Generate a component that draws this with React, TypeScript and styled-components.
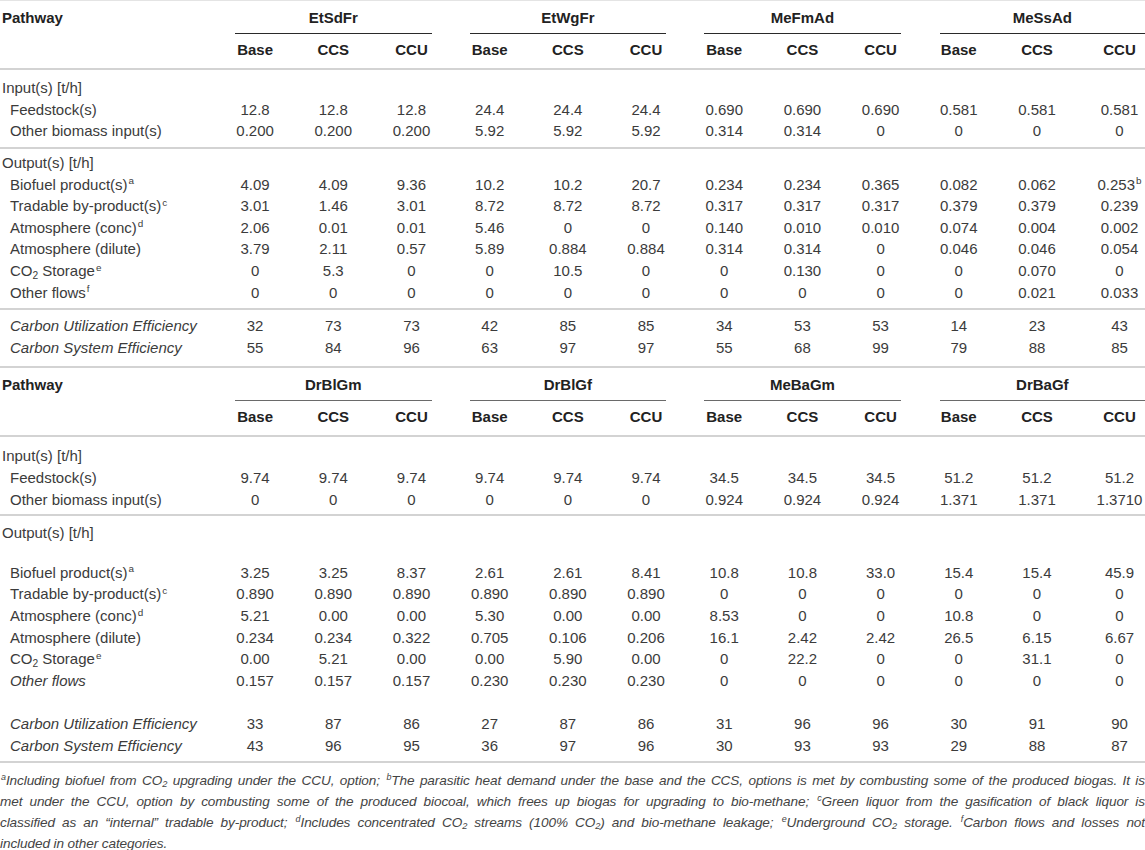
import React from "react";
import styled, { createGlobalStyle } from "styled-components";

const GlobalStyle = createGlobalStyle`
  html, body { margin: 0; padding: 0; background: #ffffff; }
  body {
    font-family: "Liberation Sans", Arial, Helvetica, sans-serif;
    color: #3b3b3b;
    -webkit-font-smoothing: antialiased;
  }
`;

const COLS = "216px repeat(11, 78.2px) 1fr";

const Page = styled.div`
  width: 1145px;
  border-top: 1px solid #e4e4e4;
`;

const GroupRow = styled.div`
  display: grid;
  grid-template-columns: ${COLS};
  padding-top: 6px;
  font-size: 15px;
`;

const HeadLabel = styled.div`
  font-weight: 700;
  color: #222;
  line-height: 22px;
  padding-left: 2px;
`;

const GroupName = styled.div<{ $tone: string }>`
  grid-column: span 3;
  margin: 0 19px;
  text-align: center;
  font-weight: 700;
  color: #222;
  line-height: 22px;
  padding-bottom: 4px;
  border-bottom: 1px solid ${(p) => p.$tone};
  &:last-child {
    margin: 0 0 0 20px;
  }
`;

const SubRow = styled.div`
  display: grid;
  grid-template-columns: ${COLS};
  padding: 5px 0 7px;
  border-bottom: 2px solid #d3d3d3;
  font-size: 15px;
`;

const SubCell = styled.div`
  text-align: center;
  font-weight: 700;
  color: #222;
  line-height: 22px;
  &:last-child {
    padding-left: 18px;
  }
`;

const Section = styled.div<{ $top: number; $bottom: number; $rule?: boolean }>`
  padding-top: ${(p) => p.$top}px;
  padding-bottom: ${(p) => p.$bottom}px;
  border-bottom: ${(p) => (p.$rule ? "2px solid #d3d3d3" : "none")};
`;

const Row = styled.div`
  display: grid;
  grid-template-columns: ${COLS};
  align-items: center;
  height: 21.6px;
  font-size: 15px;
`;

const Spacer = styled.div<{ $h: number }>`
  height: ${(p) => p.$h}px;
`;

const Label = styled.div<{ $indent?: boolean; $italic?: boolean }>`
  padding-left: ${(p) => (p.$indent ? 10 : 2)}px;
  font-style: ${(p) => (p.$italic ? "italic" : "normal")};
  white-space: nowrap;
  line-height: 21px;
`;

const Value = styled.div`
  text-align: center;
  white-space: nowrap;
  line-height: 21px;
  &:last-child {
    padding-left: 18px;
  }
`;

const Sup = styled.sup`
  font-size: 0.66em;
  line-height: 0;
  vertical-align: 0.55em;
  margin-left: 1px;
`;

const Sub = styled.sub`
  font-size: 0.68em;
  line-height: 0;
  vertical-align: -0.25em;
`;

const Notes = styled.div`
  border-top: 2px solid #d3d3d3;
  padding-top: 7px;
  font-size: 13.6px;
  font-style: italic;
  color: #444;
  letter-spacing: -0.1px;
`;

const NoteLine = styled.div<{ $last?: boolean }>`
  line-height: 21px;
  white-space: nowrap;
  text-align: justify;
  text-align-last: ${(p) => (p.$last ? "left" : "justify")};
`;

type Cell = React.ReactNode;
type DataRow = { label: React.ReactNode; italic?: boolean; values: Cell[] };

const SUBS = ["Base", "CCS", "CCU"];

const Header: React.FC<{ groups: string[]; tone: string }> = ({ groups, tone }) => (
  <>
    <GroupRow>
      <HeadLabel>Pathway</HeadLabel>
      {groups.map((g) => (
        <GroupName key={g} $tone={tone}>
          {g}
        </GroupName>
      ))}
    </GroupRow>
    <SubRow>
      <div />
      {groups.flatMap((g) => SUBS.map((s) => <SubCell key={g + s}>{s}</SubCell>))}
    </SubRow>
  </>
);

const Rows: React.FC<{ rows: DataRow[] }> = ({ rows }) => (
  <>
    {rows.map((r, i) => (
      <Row key={i}>
        <Label $indent $italic={r.italic}>
          {r.label}
        </Label>
        {r.values.map((v, j) => (
          <Value key={j}>{v}</Value>
        ))}
      </Row>
    ))}
  </>
);

const Title: React.FC<{ children: React.ReactNode }> = ({ children }) => (
  <Row>
    <Label>{children}</Label>
  </Row>
);

const split = (s: string) => s.split(" ");

const biofuel = (
  <>
    Biofuel product(s)<Sup>a</Sup>
  </>
);
const tradable = (
  <>
    Tradable by-product(s)<Sup>c</Sup>
  </>
);
const conc = (
  <>
    Atmosphere (conc)<Sup>d</Sup>
  </>
);
const storage = (
  <>
    CO<Sub>2</Sub> Storage<Sup>e</Sup>
  </>
);

const t1Input: DataRow[] = [
  { label: "Feedstock(s)", values: split("12.8 12.8 12.8 24.4 24.4 24.4 0.690 0.690 0.690 0.581 0.581 0.581") },
  { label: "Other biomass input(s)", values: split("0.200 0.200 0.200 5.92 5.92 5.92 0.314 0.314 0 0 0 0") },
];

const t1Output: DataRow[] = [
  {
    label: biofuel,
    values: [
      ...split("4.09 4.09 9.36 10.2 10.2 20.7 0.234 0.234 0.365 0.082 0.062"),
      <>
        0.253<Sup>b</Sup>
      </>,
    ],
  },
  { label: tradable, values: split("3.01 1.46 3.01 8.72 8.72 8.72 0.317 0.317 0.317 0.379 0.379 0.239") },
  { label: conc, values: split("2.06 0.01 0.01 5.46 0 0 0.140 0.010 0.010 0.074 0.004 0.002") },
  { label: "Atmosphere (dilute)", values: split("3.79 2.11 0.57 5.89 0.884 0.884 0.314 0.314 0 0.046 0.046 0.054") },
  { label: storage, values: split("0 5.3 0 0 10.5 0 0 0.130 0 0 0.070 0") },
  {
    label: (
      <>
        Other flows<Sup>f</Sup>
      </>
    ),
    values: split("0 0 0 0 0 0 0 0 0 0 0.021 0.033"),
  },
];

const t1Eff: DataRow[] = [
  { label: "Carbon Utilization Efficiency", italic: true, values: split("32 73 73 42 85 85 34 53 53 14 23 43") },
  { label: "Carbon System Efficiency", italic: true, values: split("55 84 96 63 97 97 55 68 99 79 88 85") },
];

const t2Input: DataRow[] = [
  { label: "Feedstock(s)", values: split("9.74 9.74 9.74 9.74 9.74 9.74 34.5 34.5 34.5 51.2 51.2 51.2") },
  { label: "Other biomass input(s)", values: split("0 0 0 0 0 0 0.924 0.924 0.924 1.371 1.371 1.3710") },
];

const t2Output: DataRow[] = [
  { label: biofuel, values: split("3.25 3.25 8.37 2.61 2.61 8.41 10.8 10.8 33.0 15.4 15.4 45.9") },
  { label: tradable, values: split("0.890 0.890 0.890 0.890 0.890 0.890 0 0 0 0 0 0") },
  { label: conc, values: split("5.21 0.00 0.00 5.30 0.00 0.00 8.53 0 0 10.8 0 0") },
  { label: "Atmosphere (dilute)", values: split("0.234 0.234 0.322 0.705 0.106 0.206 16.1 2.42 2.42 26.5 6.15 6.67") },
  { label: storage, values: split("0.00 5.21 0.00 0.00 5.90 0.00 0 22.2 0 0 31.1 0") },
  { label: "Other flows", italic: true, values: split("0.157 0.157 0.157 0.230 0.230 0.230 0 0 0 0 0 0") },
];

const t2Eff: DataRow[] = [
  { label: "Carbon Utilization Efficiency", italic: true, values: split("33 87 86 27 87 86 31 96 96 30 91 90") },
  { label: "Carbon System Efficiency", italic: true, values: split("43 96 95 36 97 96 30 93 93 29 88 87") },
];

export default function App() {
  return (
    <>
      <GlobalStyle />
      <Page>
        <Header groups={["EtSdFr", "EtWgFr", "MeFmAd", "MeSsAd"]} tone="#2a2a2a" />
        <Section $top={7} $bottom={5} $rule>
          <Title>Input(s) [t/h]</Title>
          <Rows rows={t1Input} />
        </Section>
        <Section $top={3} $bottom={5} $rule>
          <Title>Output(s) [t/h]</Title>
          <Rows rows={t1Output} />
        </Section>
        <Section $top={5} $bottom={8} $rule>
          <Rows rows={t1Eff} />
        </Section>

        <Header groups={["DrBlGm", "DrBlGf", "MeBaGm", "DrBaGf"]} tone="#6a6a6a" />
        <Section $top={8} $bottom={4} $rule>
          <Title>Input(s) [t/h]</Title>
          <Rows rows={t2Input} />
        </Section>
        <Section $top={6} $bottom={5}>
          <Title>Output(s) [t/h]</Title>
          <Spacer $h={18} />
          <Rows rows={t2Output} />
          <Spacer $h={21.6} />
          <Rows rows={t2Eff} />
        </Section>

        <Notes>
          <NoteLine>
            <Sup>a</Sup>Including biofuel from CO<Sub>2</Sub> upgrading under the CCU, option; <Sup>b</Sup>The parasitic
            heat demand under the base and the CCS, options is met by combusting some of the produced biogas. It is
          </NoteLine>
          <NoteLine>
            met under the CCU, option by combusting some of the produced biocoal, which frees up biogas for upgrading to
            bio-methane; <Sup>c</Sup>Green liquor from the gasification of black liquor is
          </NoteLine>
          <NoteLine>
            classified as an “internal” tradable by-product; <Sup>d</Sup>Includes concentrated CO<Sub>2</Sub> streams
            (100% CO<Sub>2</Sub>) and bio-methane leakage; <Sup>e</Sup>Underground CO<Sub>2</Sub> storage.{" "}
            <Sup>f</Sup>Carbon flows and losses not
          </NoteLine>
          <NoteLine $last>included in other categories.</NoteLine>
        </Notes>
      </Page>
    </>
  );
}
